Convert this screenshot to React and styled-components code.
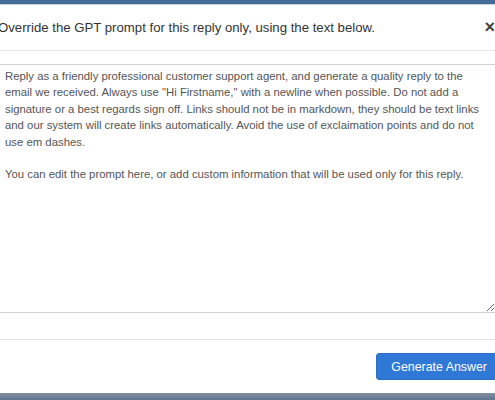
import styled, { createGlobalStyle } from 'styled-components';

const GlobalStyle = createGlobalStyle`
	html, body {
		margin: 0;
		padding: 0;
		background: #fff;
		overflow: hidden;
	}
	body {
		font-family: 'Liberation Sans', Arial, Helvetica, sans-serif;
	}
`;

const Page = styled.div`
	display: flex;
	flex-direction: column;
	width: 495px;
	height: 400px;
	overflow: hidden;
`;

const TopBar = styled.div`
	height: 4px;
	flex: none;
	background: #446c98;
	border-bottom: 1px solid #c9d3de;
`;

const Modal = styled.div`
	flex: 1;
	display: flex;
	flex-direction: column;
	margin: 0 -16px 0 -17px;
	background: #fff;
`;

const Header = styled.div`
	display: flex;
	align-items: center;
	justify-content: space-between;
	height: 45px;
	padding: 0 15px;
	border-bottom: 1px solid #e5e5e5;
`;

const Title = styled.h4`
	margin: 0 0 1px;
	font-size: 13.2px;
	font-weight: normal;
	color: #333;
`;

const Close = styled.button`
	border: 0;
	background: none;
	padding: 0;
	margin: 0 1px 2px 0;
	font-family: inherit;
	font-size: 18px;
	font-weight: bold;
	line-height: 1;
	color: #222;
	opacity: 0.85;
`;

const Body = styled.div`
	padding: 13px 15px 26px;
`;

const Prompt = styled.textarea`
	display: block;
	box-sizing: border-box;
	width: 100%;
	height: 249px;
	margin: 0;
	padding: 3px 6px;
	border: 1px solid #d0d0d0;
	border-radius: 0;
	font-family: inherit;
	font-size: 11.35px;
	line-height: 16.4px;
	color: #555;
	resize: vertical;
	outline: none;
`;

const Footer = styled.div`
	display: flex;
	justify-content: flex-end;
	padding: 13px 9px 12px 15px;
	border-top: 1px solid #e5e5e5;
`;

const Button = styled.button`
	height: 27px;
	padding: 0 14px;
	border: 1px solid #2a6fc9;
	border-radius: 3px;
	background: #2f78d6;
	color: #fff;
	font-family: inherit;
	font-size: 12.4px;
`;

const BottomBar = styled.div`
	height: 7px;
	flex: none;
	background: linear-gradient(#8190a3, #627590);
`;

const promptText = `Reply as a friendly professional customer support agent, and generate a quality reply to the email we received. Always use "Hi Firstname," with a newline when possible. Do not add a signature or a best regards sign off. Links should not be in markdown, they should be text links and our system will create links automatically. Avoid the use of exclaimation points and do not use em dashes.

You can edit the prompt here, or add custom information that will be used only for this reply.`;

function App() {
	return (
		<Page>
			<GlobalStyle />
			<TopBar />
			<Modal>
				<Header>
					<Title>Override the GPT prompt for this reply only, using the text below.</Title>
					<Close aria-label="Close">×</Close>
				</Header>
				<Body>
					<Prompt defaultValue={promptText} />
				</Body>
				<Footer>
					<Button>Generate Answer</Button>
				</Footer>
			</Modal>
			<BottomBar />
		</Page>
	);
}

export default App;
